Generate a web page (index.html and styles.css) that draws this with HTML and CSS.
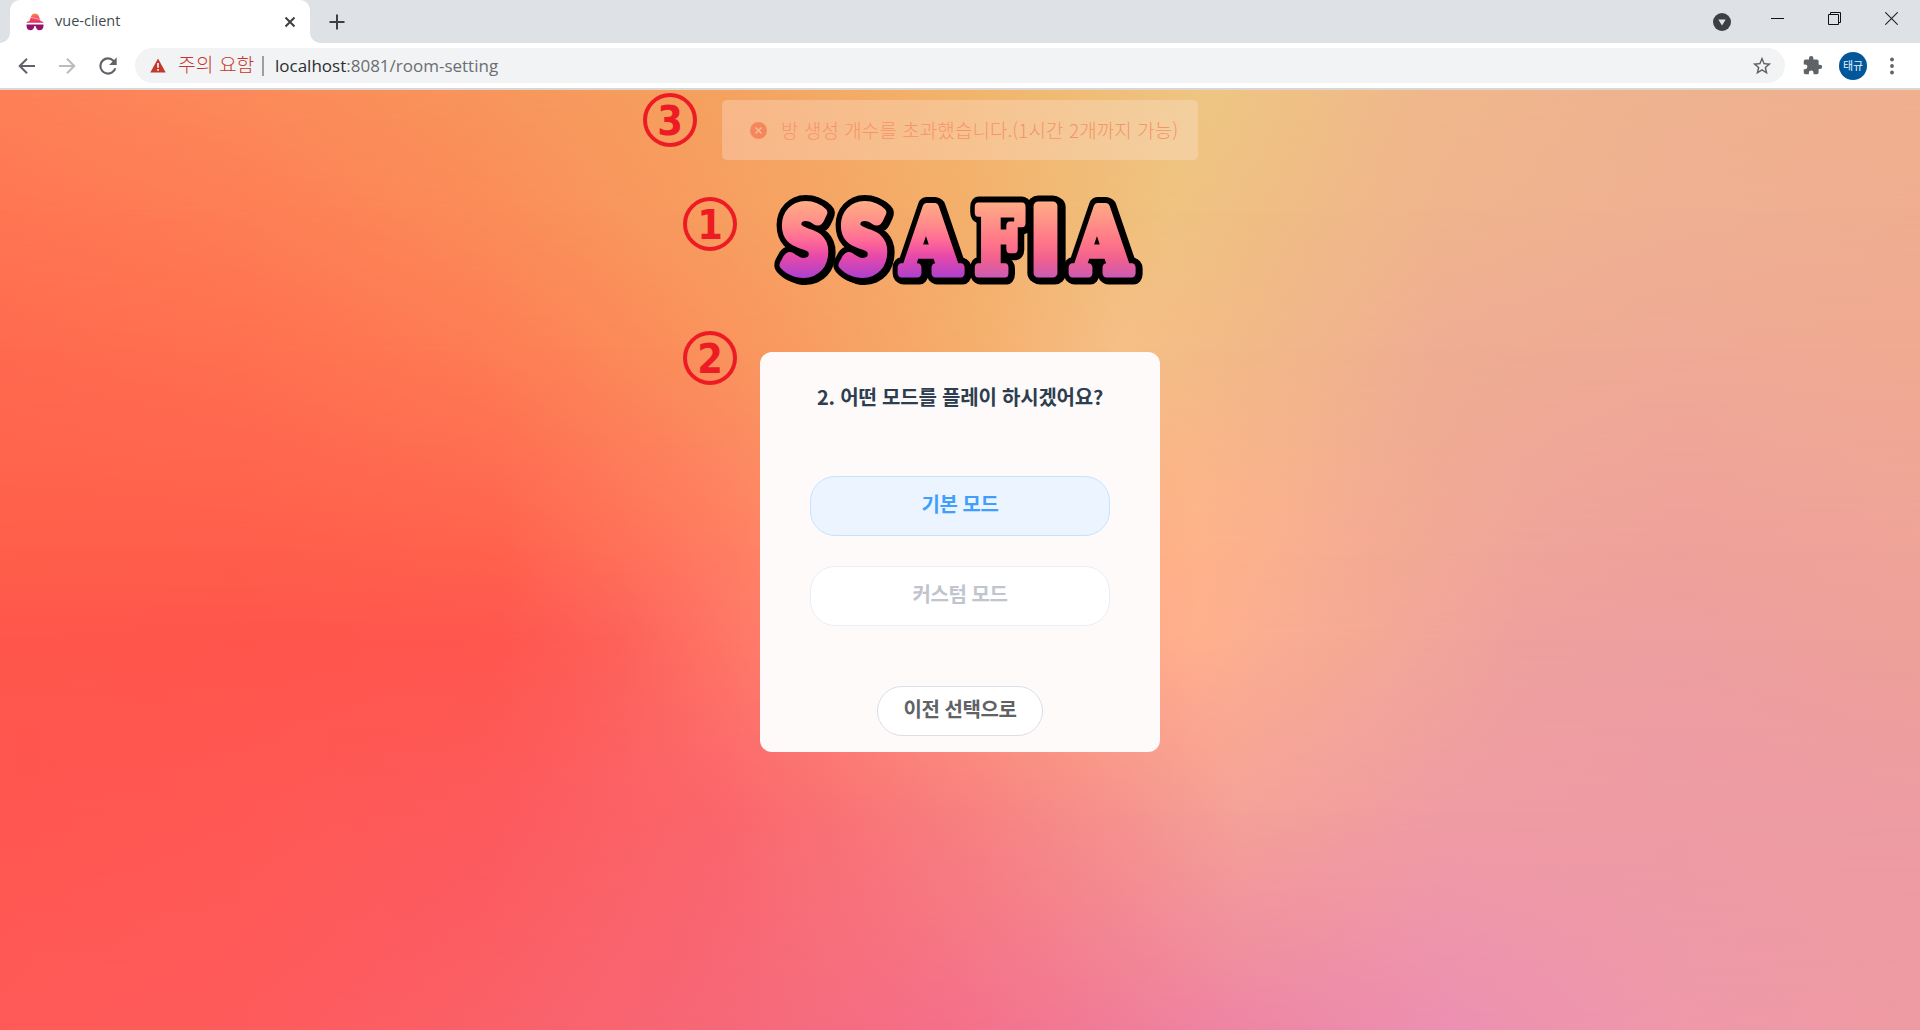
FILE: index.html
```html
<!DOCTYPE html>
<html lang="ko">
<head>
<meta charset="utf-8">
<title>vue-client</title>
<link rel="stylesheet" href="styles.css">
</head>
<body>
<header class="browser">
  <div class="tabstrip">
    <div class="tab">
      <svg class="favicon" width="18" height="18" viewBox="0 0 18 18">
        <defs><linearGradient id="hat" x1="0" y1="0" x2="0" y2="1"><stop offset="0" stop-color="#f98b4b"/><stop offset=".55" stop-color="#f4476b"/><stop offset="1" stop-color="#e62a68"/></linearGradient></defs>
        <path d="M3.500 8 5.300 2.800Q6.500.5 9 .5T12.700 2.800L14.500 8Q17.500 8.500 17.700 9.700H.3Q.5 8.500 3.500 8Z" fill="url(#hat)"/>
        <path d="M4.500 4.200 13.800 6.500" stroke="#ffb79a" stroke-width=".8"/>
        <path d="M.5 11.500H17.500V13Q17 17.300 13.500 17.300 10.300 17.300 9.800 13.300H8.200Q7.700 17.300 4.500 17.300 1 17.300.5 13Z" fill="#93126b"/>
      </svg>
      <span class="tab-title">vue-client</span>
      <svg class="tab-close" width="12" height="12" viewBox="0 0 12 12"><path d="m1.500 1.500 9 9m0-9-9 9" stroke="#3c4043" stroke-width="2"/></svg>
    </div>
    <svg class="new-tab" width="16" height="16" viewBox="0 0 16 16"><path d="M8 .5v15M.5 8h15" stroke="#3c4043" stroke-width="2"/></svg>
    <div class="window-controls">
      <svg class="tab-search" width="18" height="18" viewBox="0 0 18 18"><circle cx="9" cy="9" r="9" fill="#3c4043"/><path d="M5.300 6.500h7.400L9 12.500Z" fill="#dee1e6"/></svg>
      <svg width="13" height="13" viewBox="0 0 13 13"><path d="M0 6.500h13" stroke="#111"/></svg>
      <svg width="13" height="13" viewBox="0 0 13 13"><path d="M.5 2.500h10v10H.5ZM2.500 2.500v-2h10v10h-2" fill="none" stroke="#111"/></svg>
      <svg width="13" height="13" viewBox="0 0 13 13"><path d="m.3.3 12.400 12.400m0-12.400L.3 12.700" stroke="#222" stroke-width="1.100"/></svg>
    </div>
  </div>
  <div class="toolbar">
    <svg class="nav" width="24" height="24" viewBox="0 0 24 24"><path d="M20 12H5m7-7.300L4.700 12l7.300 7.300" fill="none" stroke="#5f6368" stroke-width="2"/></svg>
    <svg class="nav" width="24" height="24" viewBox="0 0 24 24"><path d="M4 12h15M12 4.700l7.300 7.300-7.300 7.300" fill="none" stroke="#babcbe" stroke-width="2"/></svg>
    <svg class="nav" width="26" height="26" viewBox="0 0 24 24"><path fill="#5f6368" d="M17.650 6.350A7.960 7.960 0 0 0 12 4a8 8 0 1 0 7.730 10h-2.080A6 6 0 1 1 12 6c1.660 0 3.140.69 4.220 1.780L13 11h7V4z"/></svg>
    <div class="omnibox">
      <svg width="16" height="15" viewBox="0 0 16 15"><path d="M8 .5 15.700 14.500H.3Z" fill="#c5362b"/><path d="M8 5v4.700M8 11v1.800" stroke="#fff" stroke-width="1.600"/></svg>
      <span class="warning">주의 요함</span>
      <span class="divider"></span>
      <span class="url"><b>localhost</b>:8081/room-setting</span>
      <svg class="star" width="22" height="22" viewBox="0 0 24 24"><path fill="#5f6368" d="m22 9.240-7.190-.62L12 2 9.190 8.630 2 9.240l5.460 4.730L5.820 21 12 17.270 18.180 21l-1.630-7.030zM12 15.400l-3.760 2.270 1-4.280-3.320-2.880 4.380-.38L12 6.100l1.710 4.040 4.380.38-3.320 2.880 1 4.280z"/></svg>
    </div>
    <svg class="extensions" width="21" height="21" viewBox="0 0 24 24"><path fill="#5f6368" d="M20.500 11H19V7a2 2 0 0 0-2-2h-4V3.500a2.500 2.500 0 0 0-5 0V5H4a2 2 0 0 0-2 2v3.800h1.500a2.700 2.700 0 0 1 0 5.400H2V20a2 2 0 0 0 2 2h3.800v-1.500a2.700 2.700 0 0 1 5.400 0V22H17a2 2 0 0 0 2-2v-4h1.500a2.500 2.500 0 0 0 0-5z"/></svg>
    <span class="avatar">태규</span>
    <svg class="menu" width="4" height="18" viewBox="0 0 4 18"><g fill="#5f6368"><circle cx="2" cy="2.500" r="1.900"/><circle cx="2" cy="9" r="1.900"/><circle cx="2" cy="15.500" r="1.900"/></g></svg>
  </div>
</header>

<main class="page">
  <div class="backdrop" aria-hidden="true">
    <i class="band band-1"></i><i class="band band-2"></i><i class="band band-3"></i><i class="band band-4"></i><i class="band band-5"></i><i class="band band-6"></i><i class="band band-7"></i>
  </div>
  <div class="toast">
    <svg width="17" height="17" viewBox="0 0 17 17"><circle cx="8.500" cy="8.500" r="8.500" fill="#f5875d"/><path d="m5.500 5.500 6 6m0-6-6 6" stroke="#f8c096" stroke-width="1.300"/></svg>
    <span>방 생성 개수를 초과했습니다.(1시간 2개까지 가능)</span>
  </div>
  <svg class="logo" width="370" height="90" viewBox="773 195 370 90">
    <defs>
      <linearGradient id="fill" gradientUnits="userSpaceOnUse" x1="0" y1="202" x2="0" y2="279"><stop offset="0" stop-color="#ffac86"/><stop offset=".3" stop-color="#ff8b8b"/><stop offset=".5" stop-color="#ff6a96"/><stop offset=".7" stop-color="#e84aa8"/><stop offset="1" stop-color="#a93fd0"/></linearGradient>
      <linearGradient id="shade" gradientUnits="userSpaceOnUse" x1="0" y1="202" x2="0" y2="279"><stop offset="0" stop-color="#ffac86"/><stop offset=".55" stop-color="#ff7388"/><stop offset=".75" stop-color="#f06090"/><stop offset="1" stop-color="#c75bb5"/></linearGradient>
      <g id="letters-a">
        <text x="780" y="273" textLength="45" lengthAdjust="spacingAndGlyphs">S</text>
        <text x="839" y="273" textLength="45" lengthAdjust="spacingAndGlyphs">S</text>
        <text class="slab" x="900" y="273" textLength="58" lengthAdjust="spacingAndGlyphs">A</text>
      </g>
      <g id="letters-b">
        <text class="slab" x="973" y="273" textLength="48" lengthAdjust="spacingAndGlyphs">F</text>
        <text x="1029" y="273" textLength="29" lengthAdjust="spacingAndGlyphs">I</text>
        <text class="slab" x="1071" y="273" textLength="58" lengthAdjust="spacingAndGlyphs">A</text>
      </g>
    </defs>
    <g class="logo-outline"><use href="#letters-a"/><use href="#letters-b"/><use href="#letters-a" x="2" y="1"/><use href="#letters-b" x="2" y="1"/></g>
    <g class="logo-face"><use href="#letters-a" fill="url(#fill)" stroke="url(#fill)"/><use href="#letters-b" fill="url(#shade)" stroke="url(#shade)"/></g>
  </svg>
  <section class="card">
    <h1>2. 어떤 모드를 플레이 하시겠어요?</h1>
    <button class="mode primary">기본 모드</button>
    <button class="mode disabled">커스텀 모드</button>
    <button class="back">이전 선택으로</button>
  </section>
  <span class="marker marker-3">3</span>
  <span class="marker marker-1">1</span>
  <span class="marker marker-2">2</span>
</main>
</body>
</html>
```
FILE: styles.css
```css
* { box-sizing: border-box; }
body {
  margin: 0;
  width: 1920px;
  height: 1030px;
  overflow: hidden;
  display: flex;
  flex-direction: column;
  font-family: "Open Sans", "Noto Sans CJK KR", sans-serif;
}
svg { display: block; flex: none; }

/* Browser chrome */
.browser { height: 90px; background: #fff; border-bottom: 2px solid #d9d6d6; flex: none; }
.tabstrip { height: 43px; background: #dee1e6; display: flex; align-items: center; padding-left: 10px; }
.tab {
  position: relative;
  width: 300px;
  height: 43px;
  background: #fff;
  border-radius: 10px 10px 0 0;
  display: flex;
  align-items: center;
  padding: 0 14px 0 16px;
}
.tab::before, .tab::after {
  content: "";
  position: absolute;
  bottom: 0;
  width: 10px;
  height: 10px;
}
.tab::before { left: -10px; background: radial-gradient(circle at 0 0, transparent 9.500px, #fff 10px); }
.tab::after { right: -10px; background: radial-gradient(circle at 100% 0, transparent 9.500px, #fff 10px); }
.tab-title { margin: -2px 0 0 11px; font-size: 14.500px; line-height: 20px; color: #45494d; }
.tab-close { margin-left: auto; }
.new-tab { margin-left: 19px; }
.window-controls { margin-left: auto; display: flex; align-items: center; gap: 44px; padding: 0 22px 7px 0; }
.tab-search { margin: 7px -4px 0 0; }

.toolbar { height: 45px; display: flex; align-items: center; padding: 0 26px 0 15px; }
.nav { margin-right: 16px; }
.nav:nth-child(3) { margin-right: 14px; }
.omnibox {
  flex: 1;
  height: 35px;
  border-radius: 18px;
  background: #f1f3f4;
  display: flex;
  align-items: center;
  padding: 0 12px 0 15px;
}
.warning { margin-left: 12px; width: 76px; font: 300 19.300px/24px "Noto Sans CJK KR", sans-serif; color: #c5362b; white-space: nowrap; padding-bottom: 3px; }
.divider { width: 2px; height: 20px; margin: 0 11px 0 8px; background: #9aa0a6; }
.url { font-size: 17px; line-height: 24px; color: #6a6e73; }
.url b { font-weight: 400; color: #2b2e31; }
.star { margin-left: auto; }
.extensions { margin-left: 17px; }
.avatar {
  width: 28px;
  height: 28px;
  margin: 0 23px 0 16px;
  border-radius: 50%;
  background: #02579b;
  color: #e6f2ff;
  font-size: 11px;
  line-height: 27px;
  text-align: center;
}

/* Page */
.page { position: relative; flex: 1; display: flex; flex-direction: column; align-items: center; padding-top: 10px; }
.backdrop { position: absolute; inset: 0; z-index: -1; }

/* Each band fades in over the one above it, forming a colour mesh */
.band { position: absolute; left: 0; right: 0; bottom: 0; top: var(--from, 0); mask-image: linear-gradient(transparent, #000 var(--fade, 0px)); }
.band-1 { mask-image: none; background: linear-gradient(90deg, #fe8057, #fc8a5a 240px, #f8955c 480px, #f5a260 720px, #f2b46c 960px, #eec682 1210px, #f0b78c 1440px, #efb290 1680px, #f0b08e); }
.band-2 { --fade: 120px; background: linear-gradient(90deg, #ff7653, #fe7e55 240px, #fb8c59 480px, #f79e60 720px, #f3b06b 960px, #efc380 1170px, #f0b48d 1440px, #efb092 1680px, #f0ae90); }
.band-3 { --from: 120px; --fade: 140px; background: linear-gradient(90deg, #ff6a4e, #ff7050 240px, #fe7c54 480px, #fa935d 720px, #f5ad6b 960px, #f5bf86 1120px, #f2b888 1260px, #efad93 1440px, #efaa96 1680px, #f0aa92); }
.band-4 { --from: 260px; --fade: 200px; background: linear-gradient(90deg, #ff5f4b, #ff5e4c 240px, #ff624e 500px, #ff7c62 720px, #fca274 960px, #ffb38a 1200px, #f3ab94 1380px, #eea49a 1550px, #eea19a 1680px, #eea498); }
.band-5 { --from: 460px; --fade: 90px; background: linear-gradient(90deg, #ff564b, #ff554b 240px, #ff564e 500px, #fd625a 620px, #ff7868 740px, #ff9a7c 960px, #ffb08e 1200px, #f3a897 1390px, #eea09e 1520px, #ee9fa0 1680px, #eea099); }
.band-6 { --from: 550px; --fade: 170px; background: linear-gradient(90deg, #ff5650, #ff5854 240px, #fd5a5c 480px, #fb666c 720px, #f8807f 960px, #f5a298 1240px, #f09ca3 1440px, #ee9ba4 1680px, #ee9ca2); }
.band-7 { --from: 720px; --fade: 220px; background: linear-gradient(90deg, #ff5a58, #ff5b5c 240px, #fa6068 480px, #f66878 720px, #f4708a 960px, #ee84a2 1220px, #ec90b2 1450px, #ee98a9 1680px, #ee9aa2); }

.toast {
  width: 476px;
  height: 60px;
  border-radius: 5px;
  background: rgba(254, 232, 226, .31);
  display: flex;
  align-items: center;
  padding: 0 0 0 28px;
  color: #f69468;
  font: 300 19px/24px "Noto Sans CJK KR", sans-serif;
  white-space: nowrap;
}
.toast span { margin-left: 14px; letter-spacing: .05px; }
.logo { margin-top: 35px; overflow: visible; font: 900 92px Lato, sans-serif; stroke-linejoin: round; }
.slab { font: 700 89px "DejaVu Serif", serif; }
.logo-outline { fill: #000; stroke: #000; stroke-width: 21px; }
.logo-face { stroke-width: 9px; }

.card {
  width: 400px;
  height: 400px;
  margin-top: 67px;
  border-radius: 12px;
  background: #fffafa;
  display: flex;
  flex-direction: column;
  align-items: center;
}
.card h1 { margin: 29px 0 0; font: 700 20px/32px "Noto Sans CJK KR", sans-serif; letter-spacing: -.2px; color: #2c3e50; white-space: nowrap; }
.card button { padding: 0 0 5px; font: 700 20px "Noto Sans CJK KR", sans-serif; letter-spacing: -.4px; white-space: nowrap; }
.mode { width: 300px; height: 60px; border-radius: 25px; }
.card .primary { margin-top: 63px; background: #ecf5ff; border: 1px solid #c6e2ff; color: #409eff; }
.card .disabled { margin-top: 30px; background: #fff; border: 1px solid #ebeef5; color: #c0c4cc; }
.card .back { width: 166px; height: 50px; margin-top: 60px; border-radius: 25px; background: #fff; border: 1px solid #dcdfe6; color: #606266; }

/* Numbered callouts over the page */
.marker {
  position: absolute;
  width: 54px;
  height: 54px;
  border: 4px solid #ed1c24;
  border-radius: 50%;
  color: #ed1c24;
  font: 700 41px/48px "DejaVu Sans Condensed", "DejaVu Sans", sans-serif;
  text-align: center;
}
.marker-3 { left: 643px; top: 3px; }
.marker-1 { left: 683px; top: 107px; }
.marker-2 { left: 683px; top: 241px; }
```
